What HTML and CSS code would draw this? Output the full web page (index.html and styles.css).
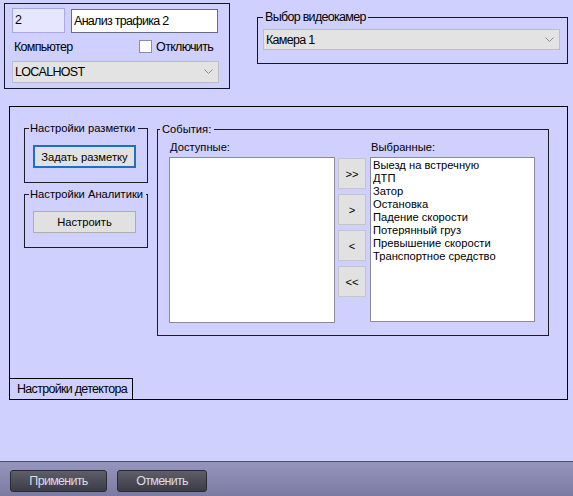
FILE: index.html
```html
<!DOCTYPE html>
<html lang="ru">
<head>
    <meta charset="UTF-8">
    <title>Анализ трафика 2</title>
    <link rel="stylesheet" href="styles.css">
</head>
<body>
    <div class="window">
        <div class="top">
            <div class="ident">
                <div class="ident-row">
                    <div class="field num">2</div>
                    <div class="field name">Анализ трафика 2</div>
                </div>
                <div class="ident-row host-row">
                    <span>Компьютер</span>
                    <label class="check"><span class="check-box"></span>Отключить</label>
                </div>
                <div class="combo host">
                    LOCALHOST
                    <svg class="chev" width="9" height="6" viewBox="0 0 9 6"><polyline points="0.5,0.5 4.5,4.5 8.5,0.5" fill="none" stroke="#8a8a8a" stroke-width="1"/></svg>
                </div>
            </div>
            <fieldset class="cams">
                <legend>Выбор видеокамер</legend>
                <div class="combo cam">
                    Камера 1
                    <svg class="chev" width="9" height="6" viewBox="0 0 9 6"><polyline points="0.5,0.5 4.5,4.5 8.5,0.5" fill="none" stroke="#8a8a8a" stroke-width="1"/></svg>
                </div>
            </fieldset>
        </div>

        <div class="panel">
            <div class="panel-body">
                <div class="left-col">
                    <fieldset class="group markup">
                        <legend>Настройки разметки</legend>
                        <button class="btn focused">Задать разметку</button>
                    </fieldset>
                    <fieldset class="group analytics">
                        <legend>Настройки Аналитики</legend>
                        <button class="btn">Настроить</button>
                    </fieldset>
                </div>
                <fieldset class="group events">
                    <legend>События:</legend>
                    <div class="events-body">
                        <div class="list-col">
                            <div class="list-label">Доступные:</div>
                            <div class="list available"></div>
                        </div>
                        <div class="move-col">
                            <button class="btn move">&gt;&gt;</button>
                            <button class="btn move">&gt;</button>
                            <button class="btn move">&lt;</button>
                            <button class="btn move">&lt;&lt;</button>
                        </div>
                        <div class="list-col chosen-col">
                            <div class="list-label">Выбранные:</div>
                            <div class="list chosen">
                                <div>Выезд на встречную</div>
                                <div>ДТП</div>
                                <div>Затор</div>
                                <div>Остановка</div>
                                <div>Падение скорости</div>
                                <div>Потерянный груз</div>
                                <div>Превышение скорости</div>
                                <div>Транспортное средство</div>
                            </div>
                        </div>
                    </div>
                </fieldset>
            </div>
            <div class="tab">Настройки детектора</div>
        </div>

        <div class="footer">
            <button class="skin-btn apply">Применить</button>
            <button class="skin-btn cancel">Отменить</button>
        </div>
    </div>
</body>
</html>
```

FILE: styles.css
```css
* {
    box-sizing: border-box;
}
body {
    margin: 0;
    background: #d0d0ff;
    font-family: "Liberation Sans", Arial, sans-serif;
    font-size: 11.2px;
    color: #000;
}
.window {
    width: 573px;
    height: 496px;
    display: flex;
    flex-direction: column;
    overflow: hidden;
}

/* skin font (narrow) */
.ident, .cams, .tab, .skin-btn {
    font-family: "Liberation Sans", Arial, sans-serif;
    font-size: 12.5px;
    letter-spacing: -0.7px;
    white-space: nowrap;
}

.top {
    display: flex;
    align-items: flex-start;
}
.ident {
    margin: 3px 0 0 4px;
    width: 226px;
    height: 86px;
    border: 1px solid #14142a;
    padding: 4px 0 0 7px;
}
.ident-row {
    display: flex;
    align-items: flex-end;
}
.field {
    height: 24px;
    line-height: 22px;
    padding-left: 2px;
    border: 1px solid #6a6a80;
    background: #fff;
}
.field.num {
    width: 53px;
    height: 25px;
    background: #e6e6ff;
    border-color: #a8a8e0;
}
.field.name {
    width: 147px;
    margin-left: 6px;
}
.host-row {
    width: 207px;
    height: 13px;
    margin-top: 7px;
    align-items: center;
    padding: 0 6px 0 2px;
}
.check {
    margin-left: auto;
    display: flex;
    align-items: center;
}
.check-box {
    width: 13px;
    height: 13px;
    border: 1px solid #8c8ca0;
    background: #fbfbfb;
    margin-right: 4px;
}
.combo {
    display: flex;
    align-items: center;
    justify-content: space-between;
    background: #e3e3e3;
    border: 1px solid #bdbdc6;
    padding: 0 5px 0 2px;
}
.combo.host {
    margin-top: 8px;
    width: 207px;
    height: 22px;
}
.chev {
    display: block;
}

fieldset {
    margin: 0;
    padding: 0;
    min-width: 0;
}
legend {
    line-height: 14px;
    padding: 0 2px;
    white-space: nowrap;
}
.cams {
    margin: 10px 0 0 27px;
    width: 311px;
    height: 54px;
    border: 1px solid #14142a;
    padding-top: 5px;
}
.cams legend {
    margin-left: 5px;
}
.combo.cam {
    margin-left: 5px;
    width: 297px;
    height: 21px;
}

.panel {
    margin: 17px 0 0 9px;
    width: 559px;
    height: 294px;
    border: 1px solid #000;
    display: flex;
    flex-direction: column;
}
.panel-body {
    flex: 1;
    display: flex;
    align-items: flex-start;
    padding: 14px 0 0 14px;
}
.left-col {
    width: 124px;
}
.group {
    border: 1px solid #1c1c28;
}
.group legend {
    margin-left: 4px;
    padding: 0 3px 0 1px;
}
.markup {
    height: 62px;
    padding-top: 10px;
}
.analytics {
    margin-top: 4px;
    height: 61px;
    padding-top: 10px;
}
.btn {
    font-family: "Liberation Sans", Arial, sans-serif;
    font-size: 11.2px;
    color: #000;
    background: #e1e1e1;
    border: 1px solid #adadad;
    padding: 0;
    display: block;
}
.markup .btn,
.analytics .btn {
    margin-left: 8px;
    width: 103px;
    height: 22px;
}
.markup .btn {
    height: 23px;
}
.btn.focused {
    border: 2px solid #1e6fc8;
}

.events {
    margin: 1px 0 0 9px;
    width: 392px;
    height: 214px;
}
.events legend {
    margin-left: 2px;
    padding: 0 3px 0 2px;
}
.events-body {
    display: flex;
    align-items: flex-start;
    padding: 4px 0 0 11px;
}
.list-label {
    height: 14px;
    line-height: 14px;
    padding-left: 1px;
}
.list {
    margin-top: 3px;
    background: #fff;
    border: 1px solid #8a8a9a;
}
.available {
    width: 166px;
    height: 166px;
}
.move-col {
    margin: 18px 0 0 3px;
    display: flex;
    flex-direction: column;
    gap: 5px;
}
.btn.move {
    width: 28px;
    height: 31px;
    border-color: #c4c4c4;
    background: #e1e1e1;
}
.chosen-col {
    margin-left: 4px;
}
.chosen {
    width: 165px;
    height: 165px;
    padding: 1px 0 0 2px;
    line-height: 13px;
}

.tab {
    width: 123px;
    height: 21px;
    line-height: 20px;
    padding-left: 7px;
    border-top: 1px solid #000;
    border-right: 1px solid #000;
}

.footer {
    margin-top: auto;
    height: 35px;
    border-top: 1px solid #4c4c62;
    background: linear-gradient(#9595bd, #7a7aa3);
    display: flex;
    gap: 10px;
    padding: 8px 0 0 10px;
}
.skin-btn {
    height: 22px;
    border: 1px solid #2a2a33;
    border-radius: 3px;
    background: linear-gradient(#5e5e68, #3c3c46);
    color: #dcdcea;
    padding: 0;
}
.apply {
    width: 97px;
}
.cancel {
    width: 90px;
}
```
